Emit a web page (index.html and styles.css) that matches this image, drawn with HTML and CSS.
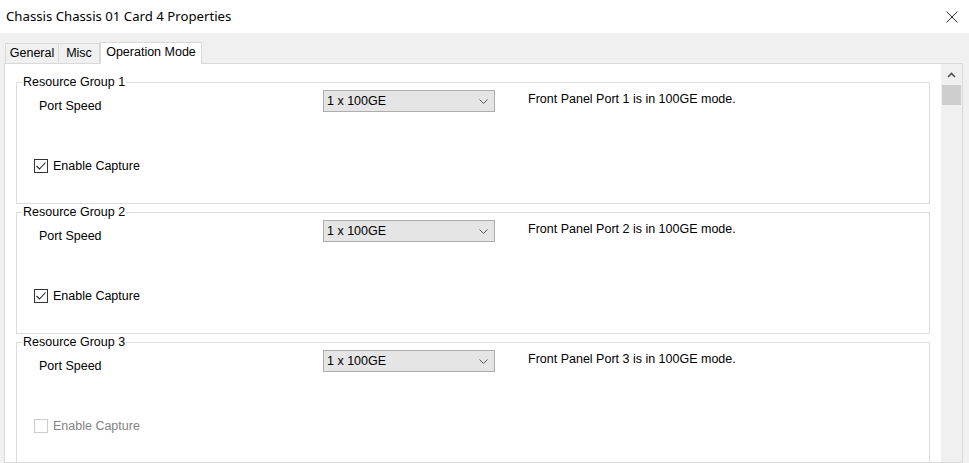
FILE: index.html
```html
<!DOCTYPE html>
<html>
<head>
<meta charset="utf-8">
<link rel="stylesheet" href="styles.css">
</head>
<body>
<div class="window">
  <div class="titlebar">
    <span class="title">Chassis Chassis 01 Card 4 Properties</span>
    <svg class="close" width="12" height="12" viewBox="0 0 12 12"><path d="M0.5 0.5 L11.5 11.5 M11.5 0.5 L0.5 11.5" stroke="#333" stroke-width="1" fill="none"/></svg>
  </div>
  <div class="tabstrip">
    <div class="tab tab-general">General</div>
    <div class="tab tab-misc">Misc</div>
    <div class="tab tab-op active">Operation Mode</div>
  </div>
  <div class="panel">
    <div class="scroll-content">
      <fieldset class="group">
        <legend>Resource Group 1</legend>
        <div class="group-body">
          <div class="row">
            <div class="label">Port Speed</div>
            <div class="combo"><span>1 x 100GE</span><svg width="9" height="5" viewBox="0 0 9 5"><path d="M0.5 0.5 L4.5 4.5 L8.5 0.5" stroke="#555" stroke-width="1" fill="none"/></svg></div>
            <div class="desc">Front Panel Port 1 is in 100GE mode.</div>
          </div>
          <div class="check-row">
            <span class="checkbox"><svg width="12" height="12" viewBox="0 0 12 12"><path d="M1.5 6 L4.5 9 L10.5 2.5" stroke="#222" stroke-width="1.1" fill="none"/></svg></span>
            <span class="check-label">Enable Capture</span>
          </div>
        </div>
      </fieldset>
      <fieldset class="group">
        <legend>Resource Group 2</legend>
        <div class="group-body">
          <div class="row">
            <div class="label">Port Speed</div>
            <div class="combo"><span>1 x 100GE</span><svg width="9" height="5" viewBox="0 0 9 5"><path d="M0.5 0.5 L4.5 4.5 L8.5 0.5" stroke="#555" stroke-width="1" fill="none"/></svg></div>
            <div class="desc">Front Panel Port 2 is in 100GE mode.</div>
          </div>
          <div class="check-row">
            <span class="checkbox"><svg width="12" height="12" viewBox="0 0 12 12"><path d="M1.5 6 L4.5 9 L10.5 2.5" stroke="#222" stroke-width="1.1" fill="none"/></svg></span>
            <span class="check-label">Enable Capture</span>
          </div>
        </div>
      </fieldset>
      <fieldset class="group">
        <legend>Resource Group 3</legend>
        <div class="group-body">
          <div class="row">
            <div class="label">Port Speed</div>
            <div class="combo"><span>1 x 100GE</span><svg width="9" height="5" viewBox="0 0 9 5"><path d="M0.5 0.5 L4.5 4.5 L8.5 0.5" stroke="#555" stroke-width="1" fill="none"/></svg></div>
            <div class="desc">Front Panel Port 3 is in 100GE mode.</div>
          </div>
          <div class="check-row disabled">
            <span class="checkbox"></span>
            <span class="check-label">Enable Capture</span>
          </div>
        </div>
      </fieldset>
    </div>
    <div class="scrollbar">
      <div class="scroll-btn"><svg width="9" height="6" viewBox="0 0 9 6"><path d="M1 5 L4.5 1.5 L8 5" stroke="#505050" stroke-width="1.6" fill="none"/></svg></div>
      <div class="thumb"></div>
    </div>
  </div>
</div>
</body>
</html>
```
FILE: styles.css
```css
html, body {
  margin: 0;
  padding: 0;
}
body {
  width: 969px;
  height: 463px;
  overflow: hidden;
  background: #f0f0f0;
  font-family: "Liberation Sans", Arial, sans-serif;
  font-size: 12.5px;
  color: #000;
}
.window {
  width: 969px;
  height: 463px;
  display: flex;
  flex-direction: column;
  overflow: hidden;
}
.titlebar {
  height: 33px;
  flex: none;
  background: #fff;
  display: flex;
  align-items: center;
  justify-content: space-between;
  padding: 0 11px 0 6px;
  box-sizing: border-box;
}
.title {
  font-family: "Noto Sans", "Open Sans", sans-serif;
  font-size: 13.2px;
  color: #000;
  position: relative;
  top: -1px;
}
.close {
  display: block;
}
.tabstrip {
  height: 30px;
  flex: none;
  display: flex;
  align-items: flex-end;
  padding-left: 5px;
  box-sizing: border-box;
}
.tab {
  box-sizing: border-box;
  height: 20px;
  line-height: 18px;
  border: 1px solid #d9d9d9;
  border-bottom: none;
  text-align: center;
  background: #f0f0f0;
}
.tab + .tab {
  border-left: none;
}
.tab-general { width: 54px; }
.tab-misc { width: 41px; }
.tab-op { width: 102px; }
.tab.active {
  height: 22px;
  margin-bottom: -1px;
  background: #fff;
  position: relative;
  z-index: 1;
  line-height: 19px;
  border-left: 1px solid #d9d9d9;
}
.panel {
  flex: 1;
  margin-left: 4px;
  width: 959px;
  box-sizing: border-box;
  border: 1px solid #d9d9d9;
  background: #fff;
  display: flex;
  min-height: 0;
}
.scroll-content {
  flex: 1;
  padding: 10px 11px 0 11px;
  overflow: hidden;
}
.group {
  margin: 0;
  padding: 0;
  border: 1px solid #dcdcdc;
  min-width: 0;
}
.group legend {
  padding: 0 1px;
  margin-left: 5px;
  line-height: 16px;
}
.group-body {
  height: 113px;
}
.row {
  display: flex;
  height: 22px;
}
.label {
  width: 306px;
  flex: none;
  box-sizing: border-box;
  padding-left: 22px;
  padding-top: 9px;
  line-height: 15px;
}
.combo {
  width: 172px;
  height: 22px;
  flex: none;
  box-sizing: border-box;
  border: 1px solid #adadad;
  background: #e5e5e5;
  display: flex;
  align-items: center;
  justify-content: space-between;
  padding: 0 6px 0 3px;
  line-height: 15px;
}
.combo svg {
  display: block;
}
.desc {
  margin-left: 33px;
  padding-top: 2px;
  line-height: 15px;
}
.check-row {
  margin-top: 46px;
  height: 16px;
  display: flex;
  align-items: center;
  padding-left: 17px;
  line-height: 15px;
}
.checkbox {
  width: 14px;
  height: 14px;
  box-sizing: border-box;
  border: 1px solid #333;
  background: #fff;
  display: flex;
  align-items: center;
  justify-content: center;
}
.checkbox svg {
  display: block;
}
.check-label {
  margin-left: 5px;
}
.check-row.disabled .checkbox {
  border-color: #cccccc;
}
.check-row.disabled .check-label {
  color: #838383;
}
.scrollbar {
  width: 21px;
  flex: none;
  background: #f0f0f0;
  display: flex;
  flex-direction: column;
}
.scroll-btn {
  height: 21px;
  display: flex;
  align-items: center;
  justify-content: center;
}
.scroll-btn svg {
  display: block;
}
.thumb {
  height: 20px;
  margin: 0 1px;
  background: #cdcdcd;
}
```
